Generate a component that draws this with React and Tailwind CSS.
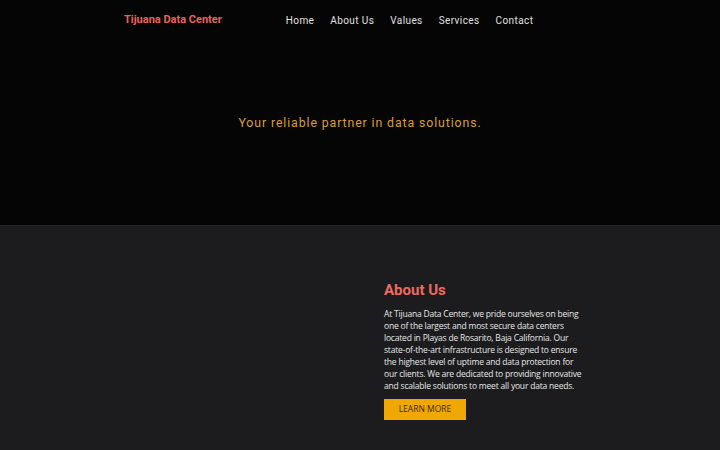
export default function App() {
  const links = ["Home", "About Us", "Values", "Services", "Contact"];
  return (
    <div className="min-h-[450px] w-full bg-[#1c1c1e]" style={{ fontFamily: "Roboto, sans-serif" }}>
      <header className="bg-[#050505]">
        <nav className="mx-auto flex h-[40px] w-[472px] items-center pt-[1px]">
          <span className="text-[11px] font-bold text-[#e8645c]">Tijuana Data Center</span>
          <ul className="ml-[64px] flex gap-[16px]">
            {links.map((l) => (
              <li key={l} className="text-[10px] tracking-[0.4px] text-[#e0e0e0]">
                {l}
              </li>
            ))}
          </ul>
        </nav>
        <section className="flex h-[185px] items-start justify-center pt-[74px]">
          <p className="text-[12.3px] tracking-[0.9px] text-[#d9a032]">
            Your reliable partner in data solutions.
          </p>
        </section>
      </header>
      <main className="border-t border-[#262628]">
        <div className="mx-auto grid w-[472px] grid-cols-2 pt-[53px] pb-[30px]">
          <div />
          <div className="pl-[24px]">
            <h2 className="text-[15px] font-bold text-[#ec6a60]">About Us</h2>
            <p
              className="mt-[6px] w-[204px] text-[8.5px] leading-[12px] tracking-[-0.2px] text-[#e6e6e6]"
              style={{ fontFamily: "'Open Sans', sans-serif" }}
            >
              At Tijuana Data Center, we pride ourselves on being one of the largest and most secure data centers located in Playas de Rosarito, Baja California. Our state-of-the-art infrastructure is designed to ensure the highest level of uptime and data protection for our clients. We are dedicated to providing innovative and scalable solutions to meet all your data needs.
            </p>
            <button
              className="mt-[7px] flex h-[21px] w-[82px] items-center justify-center bg-[#f0a800] text-[8.5px] text-[#3a2a00]"
              style={{ fontFamily: "'Open Sans', sans-serif" }}
            >
              LEARN MORE
            </button>
          </div>
        </div>
      </main>
    </div>
  );
}
